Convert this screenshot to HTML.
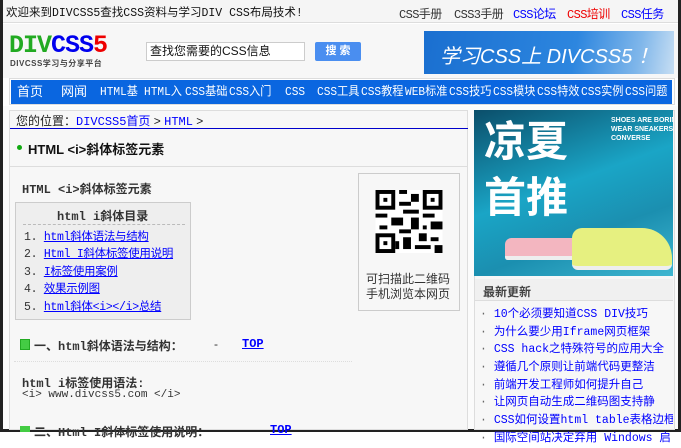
<!DOCTYPE html>
<html><head><meta charset="utf-8">
<style>
*{margin:0;padding:0;box-sizing:border-box}
body{width:681px;height:432px;overflow:hidden;background:#fff;font-family:"Liberation Sans","Noto Sans CJK SC",sans-serif;font-size:12px;color:#333;position:relative}
.a{position:absolute;white-space:nowrap}
.mono{font-family:"Liberation Mono","Noto Sans CJK SC",monospace}
a{color:#00f}
.nav span{position:absolute;top:0;color:#fff;font-size:12px;line-height:24px;transform:scaleX(0.93);transform-origin:left center;font-family:"Liberation Mono","Noto Sans CJK SC",monospace}
.news div{height:17.7px;line-height:17.7px;font-size:11.5px;color:#00f}
.news div:before{content:"· ";color:#666}
</style></head><body>
<div class="a" style="left:0;top:0;width:3px;height:432px;background:#222"></div>
<div class="a" style="right:0;top:0;width:3px;height:432px;background:#222"></div>
<div class="a" style="left:0;top:429px;width:681px;height:3px;background:#222"></div>
<div class="a" style="left:3px;top:0;width:675px;height:23px;background:#f5f5f5;border-bottom:1px solid #ddd"></div>
<div class="a mono" style="left:6px;top:4px;font-size:11.5px;color:#111">欢迎来到DIVCSS5查找CSS资料与学习DIV CSS布局技术!</div>
<div class="a mono" style="left:399px;top:5px;font-size:12px;color:#333;letter-spacing:-0.6px">CSS手册</div>
<div class="a mono" style="left:454px;top:5px;font-size:12px;color:#333;letter-spacing:-0.6px">CSS3手册</div>
<div class="a mono" style="left:513px;top:5px;font-size:12px;color:#00f;letter-spacing:-0.6px">CSS论坛</div>
<div class="a mono" style="left:567px;top:5px;font-size:12px;color:#e00;letter-spacing:-0.6px">CSS培训</div>
<div class="a mono" style="left:621px;top:5px;font-size:12px;color:#00f;letter-spacing:-0.6px">CSS任务</div>
<div class="a" style="left:3px;top:24px;width:675px;height:54px;background:#f7f7f7"></div>
<div class="a mono" style="left:9px;top:33px;font-size:25px;font-weight:bold;letter-spacing:-1px;line-height:26px"><span style="color:#2a2">DIV</span><span style="color:#00e">CSS</span><span style="color:#e00">5</span></div>
<div class="a" style="left:10px;top:58px;font-size:8px;font-weight:bold;color:#444;letter-spacing:0.5px">DIVCSS学习与分享平台</div>
<div class="a" style="left:146px;top:42px;width:159px;height:19px;background:#fff;border:1px solid #ccc;font-size:12px;line-height:17px;padding-left:3px;color:#111">查找您需要的CSS信息</div>
<div class="a" style="left:315px;top:42px;width:46px;height:19px;background:#4a8ef0;border-radius:2px;color:#fff;font-size:11px;line-height:19px;text-align:center;font-weight:bold">搜 索</div>
<div class="a" style="left:424px;top:31px;width:250px;height:43px;background:linear-gradient(100deg,#1a6fd0 0%,#2d86df 60%,#7fb6ea 85%,#c7def3 100%)"></div>
<div class="a" style="left:440px;top:40px;color:#fff;font-size:20px;font-style:italic">学习CSS上 DIVCSS5 ！</div>
<div class="a" style="left:9px;top:78px;width:666px;height:27px;background:#fff;border:1px solid #ddd"></div>
<div class="a nav" style="left:11px;top:80px;width:661px;height:24px;background:#0a66e0;overflow:hidden">
<span style="left:6px;font-size:13px;transform:none;font-family:'Liberation Sans','Noto Sans CJK SC',sans-serif">首页</span><span style="left:50px;font-size:13px;transform:none;font-family:'Liberation Sans','Noto Sans CJK SC',sans-serif">网闻</span>
<span style="left:89px">HTML基</span><span style="left:133px">HTML入</span>
<span style="left:174px">CSS基础</span><span style="left:218px">CSS入门</span>
<span style="left:274px">CSS</span><span style="left:306px">CSS工具</span>
<span style="left:350px">CSS教程</span><span style="left:394px">WEB标准</span>
<span style="left:438px">CSS技巧</span><span style="left:482px">CSS模块</span>
<span style="left:526px">CSS特效</span><span style="left:570px">CSS实例</span>
<span style="left:614px">CSS问题</span>
</div>
<div class="a" style="left:3px;top:106px;width:675px;height:323px;background:#fbfbfb"></div>
<div class="a" style="left:9px;top:110px;width:459px;height:320px;background:#f7f7f7;border:1px solid #ddd"></div>
<div class="a" style="left:10px;top:128px;width:458px;height:1px;background:#00c"></div>
<div class="a" style="left:16px;top:112px;font-size:12px;color:#222">您的位置：<span class="mono" style="color:#00f">DIVCSS5首页</span> &gt; <span class="mono" style="color:#00f">HTML</span> &gt;</div>
<div class="a" style="left:17px;top:145px;width:5px;height:5px;border-radius:50%;background:#1a1"></div>
<div class="a" style="left:28px;top:139px;font-size:13px;font-weight:bold;color:#111">HTML &lt;i&gt;斜体标签元素</div>
<div class="a" style="left:10px;top:166px;width:458px;height:1px;background:#ddd"></div>
<div class="a mono" style="left:22px;top:180px;font-size:12px;font-weight:bold;color:#333">HTML &lt;i&gt;斜体标签元素</div>
<div class="a" style="left:15px;top:202px;width:176px;height:118px;background:#eee;border:1px solid #ccc"></div>
<div class="a mono" style="left:57px;top:207px;font-size:12px;font-weight:bold;color:#333">html i斜体目录</div>
<div class="a" style="left:23px;top:224px;width:162px;border-top:1px dashed #bbb"></div>
<div class="a mono" style="left:24px;top:229px;font-size:11.5px;line-height:17.4px;color:#333;letter-spacing:-0.3px">
1. <a href="#">html斜体语法与结构</a><br>2. <a href="#">Html I斜体标签使用说明</a><br>3. <a href="#">I标签使用案例</a><br>4. <a href="#">效果示例图</a><br>5. <a href="#">html斜体&lt;i&gt;&lt;/i&gt;总结</a></div>
<div class="a" style="left:358px;top:173px;width:102px;height:138px;background:#f7f7f7;border:1px solid #ccc"></div>
<svg class="a" style="left:375px;top:190px" width="68" height="63" viewBox="0 0 17 16">
<rect width="17" height="16" fill="#fff"/>
<g fill="#000"><rect x="0" y="0" width="5" height="5"/><rect x="12" y="0" width="5" height="5"/><rect x="0" y="11" width="5" height="5"/></g>
<g fill="#fff"><rect x="1" y="1" width="3" height="3"/><rect x="13" y="1" width="3" height="3"/><rect x="1" y="12" width="3" height="3"/></g>
<g fill="#000"><rect x="2" y="2" width="1" height="1"/><rect x="14" y="2" width="1" height="1"/><rect x="2" y="13" width="1" height="1"/>
<rect x="6" y="0" width="2" height="1"/><rect x="9" y="1" width="2" height="2"/><rect x="6" y="3" width="3" height="1"/><rect x="7" y="5" width="4" height="1"/><rect x="0" y="6" width="3" height="1"/><rect x="4" y="7" width="3" height="2"/><rect x="9" y="7" width="2" height="3"/><rect x="12" y="6" width="3" height="1"/><rect x="14" y="8" width="3" height="2"/><rect x="1" y="9" width="2" height="1"/><rect x="6" y="10" width="3" height="1"/><rect x="11" y="11" width="2" height="2"/><rect x="7" y="12" width="2" height="3"/><rect x="10" y="14" width="4" height="1"/><rect x="14" y="12" width="2" height="1"/><rect x="15" y="14" width="2" height="2"/><rect x="12" y="9" width="1" height="1"/><rect x="5" y="13" width="1" height="2"/></g>
</svg>
<div class="a" style="left:366px;top:272px;font-size:12px;line-height:15px;color:#333;text-align:center">可扫描此二维码<br>手机浏览本网页</div>
<div class="a" style="left:20px;top:339px;width:10px;height:11px;background:#4c4;border:1px solid #2a2"></div>
<div class="a mono" style="left:34px;top:337px;font-size:12px;font-weight:bold;color:#333">一、html斜体语法与结构：</div>
<div class="a" style="left:214px;top:337px;color:#333">-</div>
<div class="a mono" style="left:242px;top:337px;font-size:12px;font-weight:bold"><a href="#">TOP</a></div>
<div class="a" style="left:14px;top:361px;width:338px;border-top:1px dotted #ddd"></div>
<div class="a mono" style="left:22px;top:374px;font-size:12px;font-weight:bold;color:#333">html i标签使用语法:</div>
<div class="a mono" style="left:22px;top:389px;font-size:11px;color:#333">&lt;i&gt; www.divcss5.com &lt;/i&gt;</div>
<div class="a" style="left:20px;top:426px;width:10px;height:6px;background:#4c4"></div>
<div class="a mono" style="left:34px;top:423px;font-size:12px;font-weight:bold;color:#333">二、Html I斜体标签使用说明：</div>
<div class="a mono" style="left:270px;top:423px;font-size:12px;font-weight:bold"><a href="#">TOP</a></div>
<div class="a" style="left:474px;top:110px;width:201px;height:320px;background:#f7f7f7;border:1px solid #ddd"></div>
<div class="a" style="left:474px;top:110px;width:199px;height:166px;background:linear-gradient(160deg,#0b4e6a,#1aa5c6 45%,#1b8fb0 70%,#3fb6d0);overflow:hidden">
<div class="a" style="left:10px;top:4px;font-size:42px;font-weight:bold;color:#fff;line-height:56px">凉夏<br>首推</div>
<div class="a" style="left:137px;top:6px;font-size:7px;color:#fff;line-height:9px;font-weight:bold">SHOES ARE BORING<br>WEAR SNEAKERS<br>CONVERSE</div>
<div class="a" style="left:31px;top:128px;width:90px;height:22px;background:#f3b6c0;border-radius:10px 30px 4px 4px;border-bottom:4px solid #eee"></div>
<div class="a" style="left:98px;top:118px;width:100px;height:42px;background:#e6f080;border-radius:10px 30px 6px 6px;border-bottom:4px solid #eee"></div>
</div>
<div class="a" style="left:475px;top:279px;width:198px;height:22px;border-bottom:1px solid #ddd;background:#f0f0f0"></div>
<div class="a" style="left:483px;top:283px;font-size:12px;font-weight:bold;color:#444">最新更新</div>
<div class="a news mono" style="left:480px;top:306px;width:193px;overflow:hidden">
<div>10个必须要知道CSS DIV技巧</div><div>为什么要少用Iframe网页框架</div><div>CSS hack之特殊符号的应用大全</div><div>遵循几个原则让前端代码更整洁</div><div>前端开发工程师如何提升自己</div><div>让网页自动生成二维码图支持静</div><div>CSS如何设置html table表格边框</div><div>国际空间站决定弃用 Windows 启</div>
</div>
</body></html>
